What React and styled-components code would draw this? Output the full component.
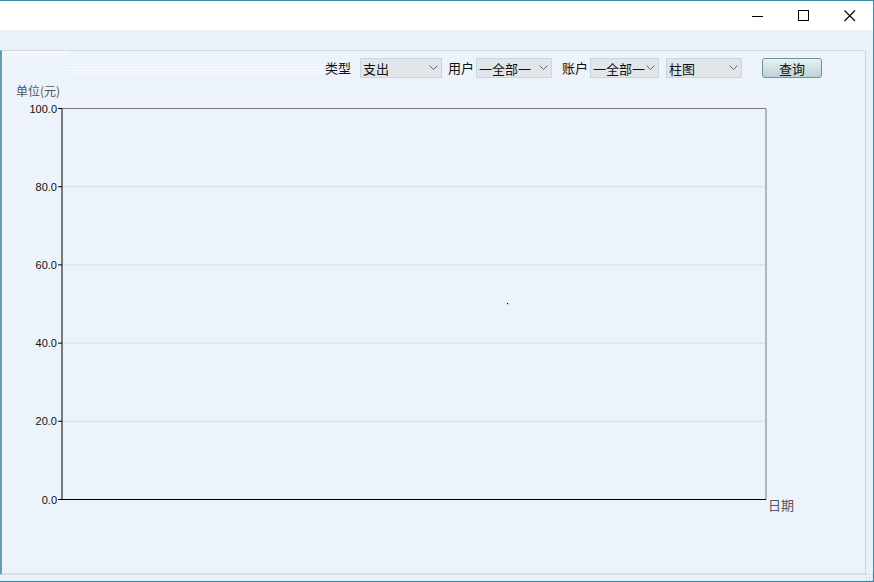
import React from "react";
import styled, { createGlobalStyle } from "styled-components";

const GlobalStyle = createGlobalStyle`
  html, body {
    margin: 0;
    padding: 0;
    overflow: hidden;
  }
  body {
    font-family: "Noto Sans CJK SC", "Liberation Sans", sans-serif;
  }
`;

const Window = styled.div`
  width: 874px;
  height: 582px;
  box-sizing: border-box;
  border: 1px solid #3b8aa0;
  border-left: none;
  display: flex;
  flex-direction: column;
  background: #eaf2f9;
`;

const TitleBar = styled.div`
  height: 29px;
  background: #ffffff;
  display: flex;
  justify-content: flex-end;
  flex-shrink: 0;
`;

const Control = styled.div`
  width: 46px;
  height: 29px;
  display: flex;
  align-items: center;
  justify-content: center;
`;

const Body = styled.div`
  flex: 1;
  display: flex;
  padding: 20px 7px 6px 0;
`;

const Panel = styled.div`
  flex: 1;
  display: flex;
  flex-direction: column;
  background: #ecf3fa;
  border-top: 1px solid #d3d9de;
  border-right: 1px solid #ccd3d9;
  border-bottom: 2px solid #d8dee3;
  border-left: 2px solid #5e9fb3;
  position: relative;
`;

const Corner = styled.div`
  height: 6px;
  width: 66px;
  background: #f3f7fb;
`;

const Toolbar = styled.div`
  display: flex;
  align-items: center;
  height: 20px;
  padding-left: 323px;
  margin-top: 1px;
  position: relative;
`;

const Stripes = styled.div`
  position: absolute;
  left: 64px;
  top: 6px;
  width: 258px;
  height: 11px;
  background: repeating-linear-gradient(
    to bottom,
    #f7fafd 0px,
    #f7fafd 1px,
    transparent 1px,
    transparent 3px
  );
  opacity: 0.8;
`;

const Label = styled.span`
  width: 25px;
  white-space: nowrap;
  font-size: 13px;
  color: #111;
  margin-right: ${(p) => p.$gap}px;
  line-height: 20px;
`;

const Select = styled.div`
  width: ${(p) => p.$w}px;
  height: 20px;
  box-sizing: border-box;
  background: #e2e6ea;
  border: 1px solid #c6d6e2;
  display: flex;
  align-items: center;
  justify-content: space-between;
  gap: 1px;
  padding: 0 3px 0 2px;
  margin-right: ${(p) => p.$gap}px;
  font-size: 13px;
  color: #111;
  white-space: nowrap;
  flex-shrink: 0;
`;

const SelectText = styled.span`
  flex-shrink: 0;
`;

const Button = styled.div`
  width: 60px;
  height: 20px;
  box-sizing: border-box;
  border: 1px solid #6f9496;
  border-radius: 3px;
  background: linear-gradient(#e9f1f1, #bcd3d5);
  font-size: 13px;
  display: flex;
  align-items: center;
  justify-content: center;
  color: #111;
`;

const ChartWrap = styled.div`
  flex: 1;
  position: relative;
`;

const Grip = styled.div`
  position: absolute;
  right: -8px;
  bottom: -8px;
  width: 8px;
  height: 8px;
  background: radial-gradient(#b8c0c6 30%, transparent 35%) 0 0 / 3px 3px;
`;

const Chevron = () => (
  <svg width="9" height="6" viewBox="0 0 9 6" style={{ flexShrink: 0 }}>
    <path d="M0.5 0.5 L4.5 4.5 L8.5 0.5" fill="none" stroke="#666" strokeWidth="1" />
  </svg>
);

function Dropdown({ value, w, gap }) {
  return (
    <Select $w={w} $gap={gap}>
      <SelectText>{value}</SelectText>
      <Chevron />
    </Select>
  );
}

const ticks = [100, 80, 60, 40, 20, 0];

function Chart() {
  // svg origin sits at page (2, 78)
  const ox = 2;
  const oy = 78;
  const left = 62 - ox;
  const right = 766 - ox;
  const top = 108.5 - oy;
  const bottom = 499.5 - oy;
  const step = (bottom - top) / 5;
  return (
    <svg width="862" height="440" style={{ display: "block" }}>
      <text x={16 - ox} y={96 - oy} fontSize="12" fill="#555" fontFamily='"Noto Sans CJK SC", sans-serif'>
        单位(元)
      </text>
      {ticks.map((t, i) => {
        const y = top + i * step;
        return (
          <g key={t}>
            {i > 0 && i < 5 && (
              <line x1={left} x2={right} y1={y} y2={y} stroke="#d6dde3" strokeWidth="1" />
            )}
            <line x1={left - 4} x2={left} y1={y} y2={y} stroke="#000" strokeWidth="1" />
            <text
              x={left - 5}
              y={y + 4}
              fontSize="11"
              textAnchor="end"
              fill="#111"
              fontFamily='"Liberation Sans", sans-serif'
            >
              {t.toFixed(1)}
            </text>
          </g>
        );
      })}
      <line x1={left} x2={right} y1={top} y2={top} stroke="#7a7a7a" />
      <line x1={right} x2={right} y1={top} y2={bottom} stroke="#7a7a7a" />
      <line x1={left} x2={left} y1={top} y2={bottom} stroke="#000" />
      <line x1={left} x2={right} y1={bottom} y2={bottom} stroke="#000" />
      <rect x={507 - ox} y={303 - oy} width="1.2" height="1.2" fill="#000" />
      <text
        x={768 - ox}
        y={510 - oy}
        fontSize="13"
        fill="#555"
        fontFamily='"Liberation Serif", "Noto Sans CJK SC", serif'
      >
        日期
      </text>
    </svg>
  );
}

export default function App() {
  return (
    <>
      <GlobalStyle />
      <Window>
        <TitleBar>
          <Control>
            <svg width="12" height="12" viewBox="0 0 12 12">
              <line x1="0" x2="11" y1="6.5" y2="6.5" stroke="#000" />
            </svg>
          </Control>
          <Control>
            <svg width="12" height="12" viewBox="0 0 12 12">
              <rect x="0.5" y="0.5" width="10" height="10" fill="none" stroke="#000" />
            </svg>
          </Control>
          <Control>
            <svg width="12" height="12" viewBox="0 0 12 12">
              <path d="M0.5 0.5 L11 11 M11 0.5 L0.5 11" stroke="#000" strokeWidth="1.1" />
            </svg>
          </Control>
        </TitleBar>
        <Body>
          <Panel>
            <Corner />
            <Toolbar>
              <Stripes />
              <Label $gap={10}>类型</Label>
              <Dropdown value="支出" w={82} gap={6} />
              <Label $gap={3}>用户</Label>
              <Dropdown value="一全部一" w={76} gap={10} />
              <Label $gap={3}>账户</Label>
              <Dropdown value="一全部一" w={69} gap={7} />
              <Dropdown value="柱图" w={76} gap={20} />
              <Button>查询</Button>
            </Toolbar>
            <ChartWrap>
              <Chart />
              <Grip />
            </ChartWrap>
          </Panel>
        </Body>
      </Window>
    </>
  );
}
